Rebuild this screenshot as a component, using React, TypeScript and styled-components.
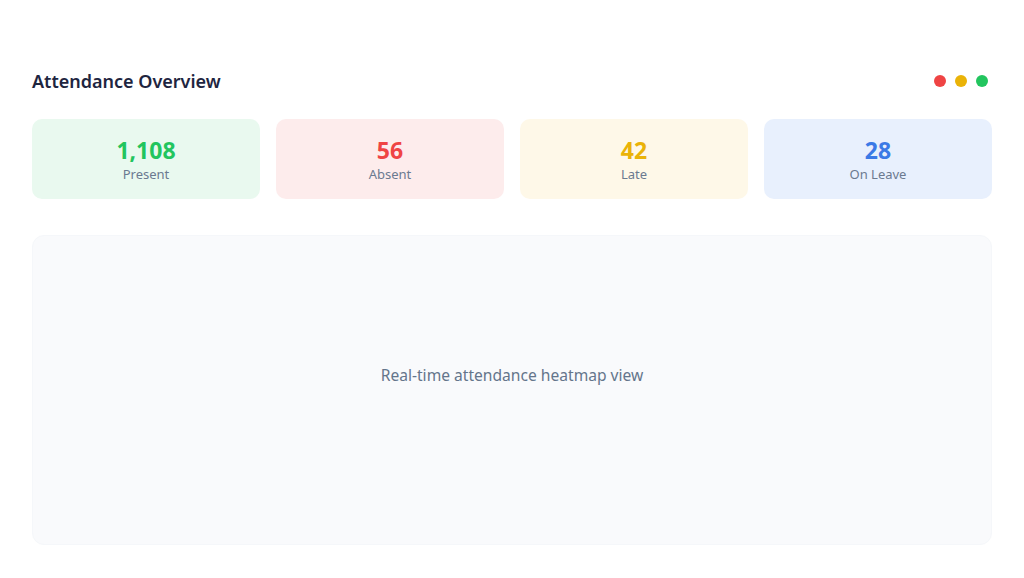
import React from "react";
import styled, { createGlobalStyle } from "styled-components";

const GlobalStyle = createGlobalStyle`
  body {
    margin: 0;
    background: #ffffff;
    font-family: "Noto Sans", "Open Sans", sans-serif;
  }
`;

interface Stat {
  value: string;
  label: string;
  color: string;
  bg: string;
}

const stats: Stat[] = [
  { value: "1,108", label: "Present", color: "#22c55e", bg: "#e9f9ef" },
  { value: "56", label: "Absent", color: "#ef4444", bg: "#fdecec" },
  { value: "42", label: "Late", color: "#eab308", bg: "#fef8e8" },
  { value: "28", label: "On Leave", color: "#3b7ae6", bg: "#e8f0fd" },
];

const dots = ["#ef4444", "#eab308", "#22c55e"];

function App() {
  return (
    <>
      <GlobalStyle />
      <Page>
        <Header>
          <Title>Attendance Overview</Title>
          <Dots>
            {dots.map((c) => (
              <Dot key={c} $color={c} />
            ))}
          </Dots>
        </Header>

        <StatGrid>
          {stats.map((s) => (
            <StatCard key={s.label} $bg={s.bg}>
              <StatValue $color={s.color}>{s.value}</StatValue>
              <StatLabel>{s.label}</StatLabel>
            </StatCard>
          ))}
        </StatGrid>

        <Heatmap>
          <HeatmapText>Real-time attendance heatmap view</HeatmapText>
        </Heatmap>
      </Page>
    </>
  );
}

const Page = styled.div`
  width: 1024px;
  height: 578px;
  box-sizing: border-box;
  padding: 68px 32px 0;
  display: flex;
  flex-direction: column;
`;

const Header = styled.div`
  display: flex;
  align-items: center;
  justify-content: space-between;
  height: 26px;
`;

const Title = styled.h1`
  margin: 0;
  font-size: 18px;
  line-height: 26px;
  font-weight: 600;
  color: #1e2540;
`;

const Dots = styled.div`
  display: flex;
  gap: 9px;
  padding-right: 4px;
`;

const Dot = styled.span<{ $color: string }>`
  width: 12px;
  height: 12px;
  border-radius: 50%;
  background: ${(p) => p.$color};
`;

const StatGrid = styled.div`
  display: grid;
  grid-template-columns: repeat(4, 1fr);
  gap: 16px;
  margin-top: 25px;
`;

const StatCard = styled.div<{ $bg: string }>`
  height: 80px;
  border-radius: 10px;
  background: ${(p) => p.$bg};
  display: flex;
  flex-direction: column;
  align-items: center;
  justify-content: center;
  gap: 1px;
`;

const StatValue = styled.div<{ $color: string }>`
  font-size: 23px;
  line-height: 28px;
  font-weight: 700;
  color: ${(p) => p.$color};
`;

const StatLabel = styled.div`
  font-size: 13px;
  line-height: 18px;
  color: #6b7a90;
`;

const Heatmap = styled.div`
  margin-top: 36px;
  height: 310px;
  box-sizing: border-box;
  padding-bottom: 30px;
  border-radius: 12px;
  background: #f9fafc;
  border: 1px solid #f5f7fa;
  display: flex;
  align-items: center;
  justify-content: center;
`;

const HeatmapText = styled.p`
  margin: 0;
  font-size: 15.6px;
  color: #64758b;
`;

export default App;
